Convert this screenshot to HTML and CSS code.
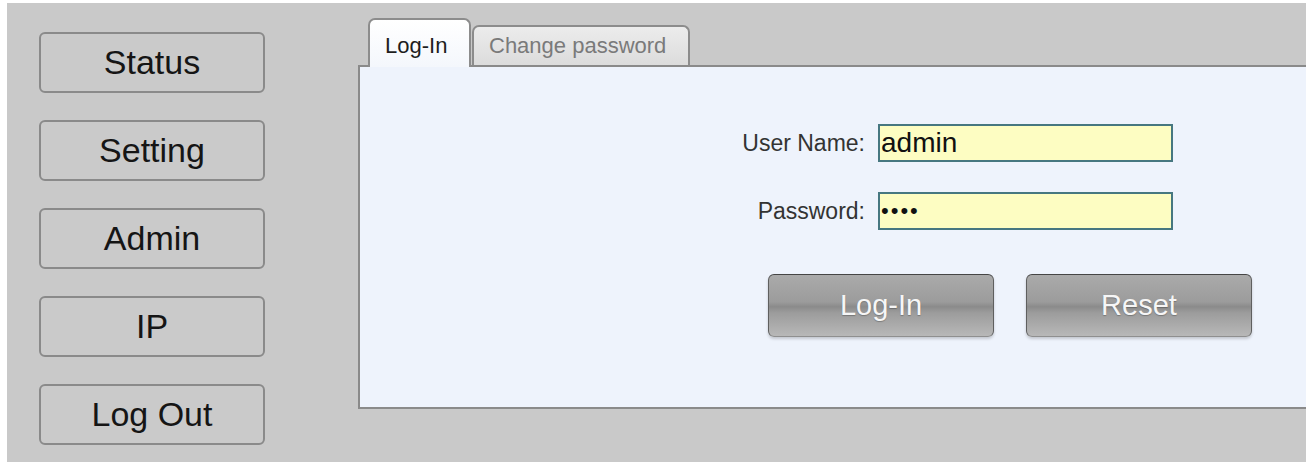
FILE: index.html
```html
<!DOCTYPE html>
<html lang="en">
<head>
<meta charset="utf-8">
<title>Log-In</title>
<link rel="stylesheet" href="styles.css">
</head>
<body>
<div class="page">
  <nav class="sidebar">
    <button class="nav-btn">Status</button>
    <button class="nav-btn">Setting</button>
    <button class="nav-btn">Admin</button>
    <button class="nav-btn">IP</button>
    <button class="nav-btn">Log Out</button>
  </nav>
  <main class="main">
    <div class="tabs">
      <div class="tab tab-active">Log-In</div>
      <div class="tab tab-inactive">Change password</div>
    </div>
    <section class="panel">
      <form class="login-form">
        <div class="fields">
          <label class="field-label" for="user">User Name:</label>
          <input class="field-input" id="user" type="text" value="admin">
          <label class="field-label" for="pass">Password:</label>
          <input class="field-input field-pass" id="pass" type="password" value="1234">
        </div>
        <div class="actions">
          <button type="button" class="action-btn">Log-In</button>
          <button type="button" class="action-btn">Reset</button>
        </div>
      </form>
    </section>
  </main>
</div>
</body>
</html>
```
FILE: styles.css
```css
html, body {
  margin: 0;
  padding: 0;
  background: #ffffff;
  font-family: "Liberation Sans", Arial, sans-serif;
}

.page {
  margin: 3px 0 0 7px;
  height: 459px;
  background: #c9c9c9;
  display: flex;
  overflow: hidden;
}

.sidebar {
  display: flex;
  flex-direction: column;
  gap: 27px;
  padding: 29px 0 0 32px;
  flex: 0 0 auto;
}

.nav-btn {
  width: 226px;
  height: 61px;
  box-sizing: border-box;
  border: 2px solid #8a8a8a;
  border-radius: 6px;
  background: #cacaca;
  font-family: "Liberation Sans", Arial, sans-serif;
  font-size: 34px;
  color: #151515;
  padding: 0;
  margin: 0;
}

.main {
  flex: 1 1 auto;
  margin-left: 93px;
  padding-top: 15px;
  display: flex;
  flex-direction: column;
}

.tabs {
  display: flex;
  align-items: flex-end;
  height: 49px;
  padding-left: 10px;
  gap: 1px;
  margin-bottom: -2px;
  position: relative;
  z-index: 1;
}

.tab {
  box-sizing: border-box;
  border: 2px solid #8c8c8c;
  border-bottom: none;
  border-radius: 7px 7px 0 0;
  font-size: 22px;
  display: flex;
  align-items: center;
  padding-left: 15px;
}

.tab-active {
  width: 103px;
  height: 49px;
  padding-top: 4px;
  background: linear-gradient(#ffffff, #f4f7fc);
  color: #1e1e1e;
}

.tab-inactive {
  width: 218px;
  height: 40px;
  margin-bottom: 2px;
  background: linear-gradient(#ececec, #dcdcdc);
  color: #7a7a7a;
}

.panel {
  box-sizing: border-box;
  height: 344px;
  border: 2px solid #8a8a8a;
  border-right: none;
  background: #eef3fc;
  padding-top: 57px;
}

.fields {
  display: grid;
  grid-template-columns: 505px 295px;
  column-gap: 13px;
  row-gap: 30px;
  align-items: center;
}

.field-label {
  text-align: right;
  font-size: 23px;
  color: #333333;
}

.field-input {
  box-sizing: border-box;
  width: 295px;
  height: 38px;
  margin: 0;
  border: 2px solid #467780;
  background: #fdfdc2;
  font-family: "Liberation Sans", Arial, sans-serif;
  font-size: 28px;
  color: #111111;
  padding: 0 1px;
  outline: none;
}

.field-pass {
  font-size: 22px;
  letter-spacing: 2px;
}

.actions {
  display: flex;
  gap: 32px;
  margin-top: 44px;
  padding-left: 408px;
}

.action-btn {
  width: 226px;
  height: 63px;
  box-sizing: border-box;
  margin: 0;
  padding: 0;
  border: 1px solid #5f5f5f;
  border-top-color: #454545;
  border-bottom-color: #8f8f8f;
  border-radius: 6px;
  background: linear-gradient(#aaaaaa 0%, #9c9c9c 44%, #8b8b8b 52%, #9c9c9c 62%, #b8b8b8 100%);
  box-shadow: 0 2px 3px rgba(0, 0, 0, 0.18);
  font-family: "Liberation Sans", Arial, sans-serif;
  font-size: 29px;
  color: #f6f6f6;
  text-shadow: 0 1px 1px rgba(0, 0, 0, 0.25);
}
```
